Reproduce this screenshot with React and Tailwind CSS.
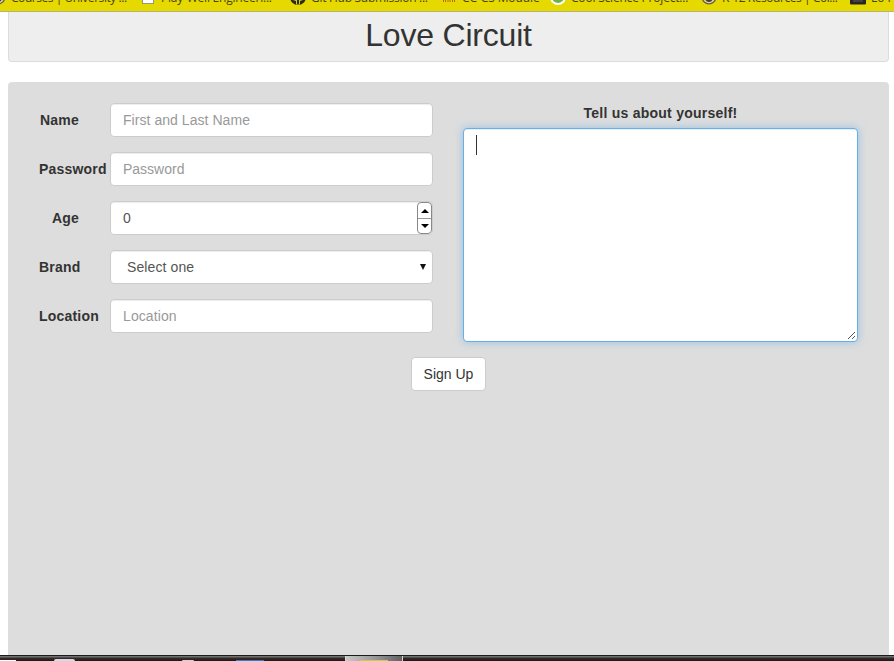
import React from "react";

const control =
  "flex h-[34px] w-[323px] items-center rounded border border-[#ccc] bg-white px-3 text-sm leading-5 shadow-[inset_0_1px_1px_rgba(0,0,0,0.075)]";

function Emblem() {
  return (
    <svg width="16" height="16" viewBox="0 0 16 16">
      <circle cx="8" cy="8" r="7.5" fill="#66603f" />
      <circle cx="8" cy="8" r="6.2" fill="#d8cf9a" />
      <circle cx="8" cy="9.5" r="3.5" fill="#4a3c2c" />
    </svg>
  );
}

function Page() {
  return (
    <svg width="16" height="16" viewBox="0 0 16 16">
      <rect x="2.5" y="1.5" width="11" height="13" fill="#fff" stroke="#9b9876" />
    </svg>
  );
}

function Octo() {
  return (
    <svg width="16" height="16" viewBox="0 0 16 16">
      <circle cx="8" cy="8" r="8" fill="#2d2c18" />
      <path d="M3 8h10v3l-3 1v3.5H6V12l-3-1z" fill="#d8cf10" />
      <path d="M7 9h2v6H7z" fill="#2d2c18" />
    </svg>
  );
}

function Bars() {
  return (
    <svg width="16" height="16" viewBox="0 0 16 16">
      <path d="M2.5 13v-3h2v3M7 13v-3h2v3M11.5 13v-3h2v3" stroke="#b56a12" strokeWidth="1" fill="none" />
    </svg>
  );
}

function Ring() {
  return (
    <svg width="16" height="16" viewBox="0 0 16 16">
      <circle cx="8" cy="8" r="8" fill="#fff" />
      <circle cx="8" cy="8" r="4.5" fill="#e9f6d8" stroke="#6eb344" strokeWidth="3" />
    </svg>
  );
}

function Dark() {
  return (
    <svg width="16" height="16" viewBox="0 0 16 16">
      <rect y="1" width="16" height="14.5" rx="1" fill="#2b2626" />
      <path d="M3 12h10" stroke="#625c5c" />
    </svg>
  );
}

function Bookmark({ icon, label, slot, text }) {
  return (
    <div className={`flex shrink-0 items-start ${slot}`}>
      <span className="mr-[5px] w-4 shrink-0">{icon}</span>
      <span className={`mt-px whitespace-nowrap leading-4 ${text}`}>{label}</span>
    </div>
  );
}

function Bookmarks() {
  return (
    <div className="h-3 overflow-hidden border-b border-[#b5b27a] bg-[#e5d900]">
      <div className="-ml-[10px] -mt-[11px] flex w-[960px] font-['Open_Sans','Noto_Sans',sans-serif] text-[12px] text-[#4a4310]">
        <Bookmark icon={<Emblem />} label="Courses | University ..." slot="w-[150px]" text="tracking-[-0.45px]" />
        <Bookmark icon={<Page />} label="Play-Well Engineeri..." slot="w-[150px]" text="tracking-[-0.22px]" />
        <Bookmark icon={<Octo />} label="Git Hub Submission ..." slot="w-[151px]" text="tracking-[-0.28px]" />
        <Bookmark icon={<Bars />} label="CC-CS Module" slot="w-[109px]" text="tracking-[-0.1px]" />
        <Bookmark icon={<Ring />} label="Cool Science Project..." slot="w-[151px]" text="tracking-[-0.2px]" />
        <Bookmark icon={<Emblem />} label="K-12 Resources | Col..." slot="w-[149px]" text="tracking-[-0.45px]" />
        <Bookmark icon={<Dark />} label="Lo Fi" slot="w-[60px]" text="" />
      </div>
    </div>
  );
}

function Field({ label, indent, children }) {
  return (
    <div className="flex h-[34px] items-center">
      <label className={`w-[102px] shrink-0 whitespace-nowrap text-sm font-bold leading-5 tracking-[0.2px] ${indent}`}>{label}</label>
      {children}
    </div>
  );
}

function Stepper() {
  return (
    <span className="flex h-8 w-[15px] shrink-0 flex-col rounded-[4px] border border-[#888] bg-white">
      <span className="flex flex-1 items-center justify-center border-b border-[#999] pt-px">
        <svg width="8" height="4" viewBox="0 0 8 4"><path d="M0 4 4 0l4 4z" /></svg>
      </span>
      <span className="flex flex-1 items-center justify-center">
        <svg width="8" height="4" viewBox="0 0 8 4"><path d="M0 0h8L4 4z" /></svg>
      </span>
    </span>
  );
}

function Taskbar() {
  return (
    <div className="flex h-[6px] shrink-0 items-end overflow-hidden border-t border-[#1b1b1b] bg-gradient-to-b from-[#85827f] via-[#302b29] to-[#1e1715]">
      <div className="h-px w-4 bg-white" />
      <div className="ml-[38px] h-[2px] w-[21px] rounded-t-sm bg-[#d5d9ea]" />
      <div className="ml-[107px] h-px w-3 rounded-t-full bg-[#d6d1cf]" />
      <div className="ml-[42px] h-[1px] w-7 bg-[#2d83d2]" />
      <div className="ml-[81px] flex h-[5px] w-[58px] items-end justify-center border-x border-[#d5d5d5] bg-gradient-to-r from-[#c9c9c9] via-[#999] to-[#626262]">
        <div className="h-px w-7 bg-[#c8cf45]" />
      </div>
    </div>
  );
}

export default function App() {
  return (
    <div className="flex h-[661px] w-[894px] flex-col overflow-hidden bg-white font-['Liberation_Sans',Arial,sans-serif] text-[#333]">
      <Bookmarks />
      <header className="ml-2 mr-[5px] h-[50px] shrink-0 rounded-b border border-t-0 border-[#dcdcdc] bg-[#eee] text-center">
        <h1 className="text-[32px] leading-[46px] tracking-[-0.2px]">Love Circuit</h1>
      </header>
      <main className="ml-2 mr-[5px] mt-5 h-[573px] shrink-0 rounded-t bg-[#ddd]">
        <div className="flex pt-[21px]">
          <div className="flex w-[425px] shrink-0 flex-col gap-[15px]">
            <Field label="Name" indent="pl-8">
              <div className={`${control} tracking-[0.05px] text-[#999]`}>First and Last Name</div>
            </Field>
            <Field label="Password" indent="pl-[31px]">
              <div className={`${control} text-[#999]`}>Password</div>
            </Field>
            <Field label="Age" indent="pl-11">
              <div className="flex h-[34px] w-[323px] items-center justify-between rounded border border-[#ccc] bg-white pl-3 text-sm text-[#555] shadow-[inset_0_1px_1px_rgba(0,0,0,0.075)]">
                <span>0</span>
                <Stepper />
              </div>
            </Field>
            <Field label="Brand" indent="pl-[31px]">
              <div className="flex h-[34px] w-[323px] items-center justify-between rounded border border-[#ccc] bg-white pl-4 pr-[6px] text-sm text-[#555] shadow-[inset_0_1px_1px_rgba(0,0,0,0.075)]">
                <span className="tracking-[0.1px]">Select one</span>
                <svg width="6" height="6" viewBox="0 0 6 6"><path d="M0 0h6L3 6z" fill="#111" /></svg>
              </div>
            </Field>
            <Field label="Location" indent="pl-[31px]">
              <div className={`${control} tracking-[0.1px] text-[#999]`}>Location</div>
            </Field>
          </div>
          <div className="ml-[30px] w-[395px]">
            <p className="mb-[5px] text-center text-sm font-bold leading-5 tracking-[0.25px]">Tell us about yourself!</p>
            <div className="flex h-[214px] flex-col justify-between rounded border border-[#66afe9] bg-white pl-3 pr-px pb-px pt-[6px] shadow-[inset_0_1px_1px_rgba(0,0,0,0.075),0_0_8px_rgba(102,175,233,0.6)]">
              <div className="h-5 w-px bg-[#333]" />
              <svg className="self-end" width="9" height="9" viewBox="0 0 9 9">
                <path d="M1 8 8 1M5 8l3-3" stroke="#555" fill="none" />
              </svg>
            </div>
          </div>
        </div>
        <div className="ml-[403px] mt-[15px] flex h-[34px] w-[75px] items-center justify-center rounded border border-[#ccc] bg-white text-sm">
          Sign Up
        </div>
      </main>
      <Taskbar />
    </div>
  );
}
